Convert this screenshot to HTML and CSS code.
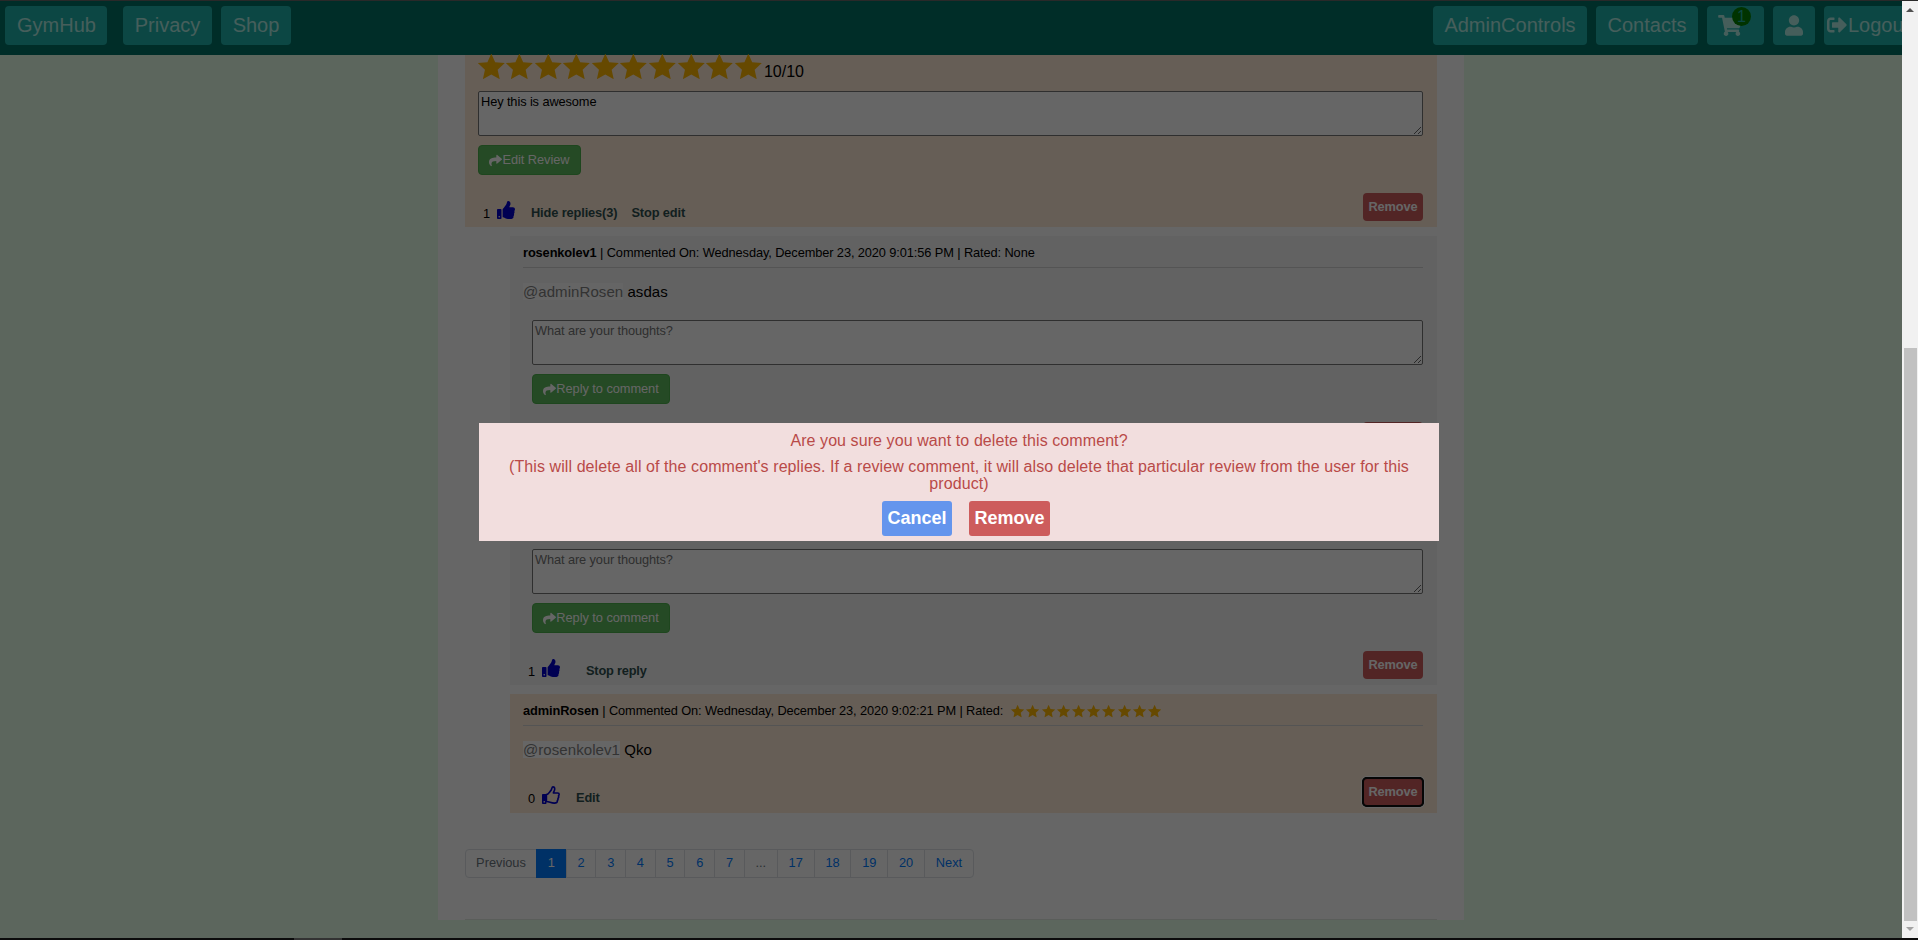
FILE: index.html
```html
<!DOCTYPE html>
<html lang="en">
<head>
<meta charset="utf-8">
<title>GymHub</title>
<link rel="stylesheet" href="styles.css">
</head>
<body>
<svg class="defs" aria-hidden="true">
  <symbol id="star" viewBox="0 0 576 512"><path d="M288 -8L366 164 560 184 416 316 458 508 288 411 118 508 160 316 16 184 210 164z"/></symbol>
  <symbol id="share" viewBox="0 0 512 512"><path d="M503.691 189.836L327.687 37.851C312.281 24.546 288 35.347 288 56.015v80.053C127.371 137.907 0 170.1 0 322.326c0 61.441 39.581 122.309 83.333 154.132 13.653 9.931 33.111-2.533 28.077-18.631C66.066 312.814 132.917 274.316 288 272.085V360c0 20.7 24.3 31.453 39.687 18.164l176.004-152c11.071-9.562 11.086-26.753 0-36.328z"/></symbol>
  <symbol id="thumb" viewBox="0 0 512 512"><path d="M104 224H24c-13.255 0-24 10.745-24 24v240c0 13.255 10.745 24 24 24h80c13.255 0 24-10.745 24-24V248c0-13.255-10.745-24-24-24zM64 472c-13.255 0-24-10.745-24-24s10.745-24 24-24 24 10.745 24 24-10.745 24-24 24zM384 81.452c0 42.416-25.97 66.208-33.277 94.548h101.723c33.397 0 59.397 27.746 59.553 58.098.084 17.938-7.546 37.249-19.439 49.197l-.11.11c9.836 23.337 8.237 56.037-9.308 79.469 8.681 25.895-.069 57.704-16.382 74.757 4.298 17.598 2.244 32.575-6.148 44.632C440.202 511.587 389.616 512 346.839 512l-2.845-.001c-48.287-.017-87.806-17.598-119.56-31.725-15.957-7.099-36.821-15.887-52.651-16.178-6.54-.12-11.783-5.457-11.783-11.998v-213.77c0-3.2 1.282-6.271 3.558-8.521 39.614-39.144 56.648-80.587 89.117-113.111 14.804-14.832 20.188-37.236 25.393-58.902C282.515 39.293 291.817 0 312 0c24 0 72 8 72 81.452z"/></symbol>
  <symbol id="thumb-o" viewBox="0 0 512 512"><path d="M104 224H24c-13 0-24 11-24 24v240c0 13 11 24 24 24h80c13 0 24-11 24-24V248c0-13-11-24-24-24zM64 472a24 24 0 1 1 0-48 24 24 0 0 1 0 48z"/><path d="M125 244C190 232 215 165 250 132c30-28 25-108 62-108 36 0 50 28 50 62 0 48-32 74-38 112h122c26 0 42 18 42 40 0 18-8 34-20 42 12 28 4 56-14 70 6 26-4 52-18 66 8 50-28 70-84 70-100 0-140-44-227-46z" fill="none" stroke="currentColor" stroke-width="46" stroke-linejoin="round"/></symbol>
</svg>
<div class="edge-top"></div>
<div class="window">
  <div class="page">
    <nav class="nav">
      <a class="nav-link brand">GymHub</a>
      <a class="nav-link privacy">Privacy</a>
      <a class="nav-link shop">Shop</a>
      <a class="nav-link admin">AdminControls</a>
      <a class="nav-link contacts">Contacts</a>
      <a class="nav-link cart"><svg class="ic-cart" viewBox="0 0 576 512"><path d="M528.12 301.319l47.273-208C578.806 78.301 567.391 64 551.99 64H159.208l-9.166-44.81C147.758 8.021 137.93 0 126.529 0H24C10.745 0 0 10.745 0 24v16c0 13.255 10.745 24 24 24h69.883l70.248 343.435C147.325 417.1 136 435.222 136 456c0 30.928 25.072 56 56 56s56-25.072 56-56c0-15.674-6.447-29.835-16.824-40h209.647C430.447 426.165 424 440.326 424 456c0 30.928 25.072 56 56 56s56-25.072 56-56c0-22.172-12.888-41.332-31.579-50.405l5.517-24.276c3.413-15.018-8.002-29.319-23.403-29.319H218.117l-6.545-32h293.145c11.206 0 20.92-7.754 23.403-18.681z"/></svg><span class="badge">1</span></a>
      <a class="nav-link user"><svg class="ic-user" viewBox="0 0 448 512"><path d="M224 256c70.7 0 128-57.3 128-128S294.7 0 224 0 96 57.3 96 128s57.3 128 128 128zm89.6 32h-16.7c-22.2 10.2-46.9 16-72.9 16s-50.6-5.8-72.9-16h-16.7C60.2 288 0 348.2 0 422.4V464c0 26.5 21.5 48 48 48h352c26.5 0 48-21.5 48-48v-41.6c0-74.2-60.2-134.4-134.4-134.4z"/></svg></a>
      <a class="nav-link logout"><svg class="ic-out" viewBox="0 0 512 512"><path d="M497 273L329 441c-15 15-41 4.5-41-17v-96H152c-13.3 0-24-10.7-24-24v-96c0-13.3 10.7-24 24-24h136V88c0-21.4 25.9-32 41-17l168 168c9.3 9.4 9.3 24.6 0 34zM192 436v-40c0-6.6-5.4-12-12-12H96c-17.7 0-32-14.3-32-32V160c0-17.7 14.3-32 32-32h84c6.6 0 12-5.4 12-12V76c0-6.6-5.4-12-12-12H96c-53 0-96 43-96 96v192c0 53 43 96 96 96h84c6.6 0 12-5.4 12-12z"/></svg>Logout</a>
    </nav>
    <main class="card">
      <section class="comment own review">
        <div class="rating"><svg><use href="#star"/></svg><svg><use href="#star"/></svg><svg><use href="#star"/></svg><svg><use href="#star"/></svg><svg><use href="#star"/></svg><svg><use href="#star"/></svg><svg><use href="#star"/></svg><svg><use href="#star"/></svg><svg><use href="#star"/></svg><svg><use href="#star"/></svg><span>10/10</span></div>
        <textarea>Hey this is awesome</textarea>
        <button class="send edit-review"><svg><use href="#share"/></svg>Edit Review</button>
        <footer class="actions"><span class="count">1</span><svg class="like"><use href="#thumb"/></svg><a class="act">Hide replies(3)</a><a class="act second">Stop edit</a><button class="remove">Remove</button></footer>
      </section>
      <section class="comment reply open">
        <header><span class="line"><b>rosenkolev1</b> | Commented On: Wednesday, December 23, 2020 9:01:56 PM | Rated: None</span></header>
        <p class="text"><span class="mention">@adminRosen</span> asdas</p>
        <div class="form"><textarea placeholder="What are your thoughts?"></textarea><button class="send"><svg><use href="#share"/></svg>Reply to comment</button></div>
        <footer class="actions"><button class="remove">Remove</button></footer>
      </section>
      <section class="comment reply open">
        <header></header>
        <p class="text"></p>
        <div class="form"><textarea placeholder="What are your thoughts?"></textarea><button class="send"><svg><use href="#share"/></svg>Reply to comment</button></div>
        <footer class="actions"><span class="count">1</span><svg class="like"><use href="#thumb"/></svg><a class="act stop-reply">Stop reply</a><button class="remove">Remove</button></footer>
      </section>
      <section class="comment reply own closed">
        <header><span class="line"><b>adminRosen</b> | Commented On: Wednesday, December 23, 2020 9:02:21 PM | Rated:</span><span class="mini"><svg><use href="#star"/></svg><svg><use href="#star"/></svg><svg><use href="#star"/></svg><svg><use href="#star"/></svg><svg><use href="#star"/></svg><svg><use href="#star"/></svg><svg><use href="#star"/></svg><svg><use href="#star"/></svg><svg><use href="#star"/></svg><svg><use href="#star"/></svg></span></header>
        <p class="text"><span class="mention">@rosenkolev1</span> Qko</p>
        <footer class="actions"><span class="count">0</span><svg class="like"><use href="#thumb-o"/></svg><a class="act edit">Edit</a><button class="remove focused">Remove</button></footer>
      </section>
      <ul class="pages">
        <li class="off prev">Previous</li><li class="on">1</li><li>2</li><li>3</li><li>4</li><li>5</li><li>6</li><li>7</li><li class="off dots">...</li><li class="wide">17</li><li class="wide">18</li><li class="wide">19</li><li class="wide">20</li><li class="next">Next</li>
      </ul>
      <div class="rule"></div>
    </main>
    <div class="overlay">
      <div class="modal">
        <p>Are you sure you want to delete this comment?</p>
        <p>(This will delete all of the comment's replies. If a review comment, it will also delete that particular review from the user for this product)</p>
        <div class="choices"><button class="cancel">Cancel</button><button class="confirm">Remove</button></div>
      </div>
    </div>
  </div>
  <div class="scrollbar"><i class="up"></i><i class="thumb"></i><i class="down"></i></div>
</div>
<div class="edge-bottom"><i></i></div>
</body>
</html>
```
FILE: styles.css
```css
* { box-sizing: border-box; }
body {
  margin: 0; width: 1918px; height: 940px; overflow: hidden;
  font-family: "Liberation Sans", Arial, sans-serif;
  display: flex; flex-direction: column;
}
button, textarea { font-family: inherit; margin: 0; }
svg { fill: currentColor; display: block; flex: none; }
.defs { position: absolute; width: 0; height: 0; }
.edge-top { height: 1px; background: #292929; flex: none; }
.edge-bottom { height: 2px; background: #0c0c0c; flex: none; }
.edge-bottom i { display: block; width: 48px; height: 2px; margin-left: 294px; background: #333; }
.window { height: 937px; display: flex; }
.page { width: 1902px; height: 937px; position: relative; overflow: hidden; background: #e6ffe9; }

.nav { height: 54px; padding: 5px 0 0 5px; display: flex; background: #007065; }
.nav-link {
  height: 39px; border-radius: 4px; background: #20b2aa; color: #b0ece4;
  font-size: 20px; line-height: 38px; text-align: center; flex: none; margin-right: 9px;
}
.brand { width: 102px; margin-right: 16px; padding-left: 1px; }
.privacy { width: 89px; }
.shop { width: 70px; margin-right: auto; }
.admin { width: 154px; }
.contacts { width: 102px; }
.cart { width: 57px; padding: 9px 0 0 11px; position: relative; }
.user { width: 42px; padding: 9px 0 0 12px; }
.logout { width: 88px; margin-right: -10px; padding-left: 3px; display: flex; gap: 1px; }
.ic-cart { width: 24px; height: 21px; }
.ic-user { width: 18px; height: 21px; }
.ic-out { width: 20px; height: 20px; margin-top: 9px; }
.badge {
  position: absolute; left: 25px; top: 1px; width: 19px; height: 19px;
  border-radius: 50%; background: #008000; color: #20b2aa; font-size: 16px; line-height: 19px;
}

.card { margin-left: 438px; width: 1026px; height: 865px; padding: 0 27px; background: #fff; }
.comment { background: #f5f5f5; display: flow-root; }
.own { background: #ffebd7; }
.review { height: 172px; padding: 0 14px 0 13px; }
.rating { height: 36px; display: flex; color: #ffb700; }
.rating svg { width: 28.6px; height: 25.4px; margin-left: -1.5px; margin-right: 1.5px; margin-top: -1px; }
.rating span { color: #000; font-size: 16px; line-height: 34px; }
textarea {
  display: block; width: 100%; height: 45px; padding: 2px; font-size: 12.8px; line-height: 16px; letter-spacing: -.1px;
  border: 1px solid #767676; border-radius: 2px; color: #000; background: #fff;
}
.send {
  display: flex; align-items: center; justify-content: center; width: 138px; height: 30px; margin-top: 9px;
  border: 1px solid #4cae4c; border-radius: 4px; background: #5cb85c; color: #fff;
  font-size: 12.8px; line-height: 16px; padding: 0; letter-spacing: -.05px;
}
.send svg { width: 13px; height: 13px; }
.edit-review { width: 103px; }
.actions { display: flex; height: 28px; color: #2f4f4f; font-size: 12.8px; line-height: 40px; padding-left: 5px; }
.review .actions { margin-top: 18px; }
.count { color: #000; width: 14px; line-height: 41px; }
.like { width: 18px; height: 18px; margin-top: 8px; color: #0000cd; }
.act { font-weight: bold; margin-left: 16px; letter-spacing: -.12px; }
.act.second { margin-left: 14px; }
.act.stop-reply { margin-left: 26px; letter-spacing: -.2px; }
.act.edit { margin-left: 16px; }
.remove {
  margin-left: auto; width: 60px; height: 28px; border: 0; border-radius: 4px; padding: 0;
  background: #cd5c5c; color: #fff; font-weight: bold; font-size: 12.8px; line-height: 28px; letter-spacing: -.1px;
}
.focused { box-shadow: 0 0 0 1px #101010, 0 0 0 2px #fff; outline: 2px solid #101010; outline-offset: -1px; }
.reply { margin: 9px 0 0 45px; padding: 0 14px 0 13px; }
.open { height: 220px; }
.closed { height: 119px; }
.reply header { height: 32px; display: flex; border-bottom: 1px solid #d3d3d3; font-size: 12.8px; line-height: 34px; }
.line { white-space: nowrap; letter-spacing: -.1px; }
.mini { display: flex; padding: 11px 0 0 7px; color: #ffb700; }
.mini svg { width: 15.2px; height: 12.5px; }
.text { margin: 15px 0 0; height: 17px; font-size: 15px; line-height: 17px; letter-spacing: .07px; }
.mention { background: #fff; color: #808080; display: inline-block; height: 17px; }
.reply:not(.own) .mention { background: #fcfcfc; }
.form { padding: 20px 0 0 9px; }
.open .actions { margin-top: 18px; }
.closed .actions { margin-top: 20px; }
.pages { list-style: none; display: flex; margin: 36px 0 0; padding: 0; height: 29px; font-size: 12.8px; line-height: 26px; color: #007bff; }
.pages li { width: 30.7px; margin-right: -1px; border: 1px solid #dee2e6; text-align: center; }
.pages .off { color: #6c757d; }
.pages .on { background: #007bff; border-color: #007bff; color: #fff; }
.pages .prev { width: 72px; border-radius: 4px 0 0 4px; }
.pages .dots { width: 34px; }
.pages .wide { width: 37.8px; }
.pages .next { width: 50px; border-radius: 0 4px 4px 0; }
.rule { margin-top: 41px; height: 1px; background: #e2e8e2; }

.overlay { position: absolute; inset: 0; background: rgba(0,0,0,.6); }
.modal {
  position: absolute; left: 479px; top: 422px; width: 960px; height: 118px; padding: 9px 25px 0;
  background: #f2dede; color: #b94a48; font-size: 16px; line-height: 17px; text-align: center;
}
.modal p { margin: 0 0 9px; letter-spacing: .083px; }
.choices { display: flex; gap: 17px; padding-left: 378px; }
.choices button { height: 35px; border: 0; border-radius: 3px; padding: 0; color: #fff; font-size: 18px; font-weight: bold; }
.cancel { width: 70px; background: #6495ed; }
.confirm { width: 81px; background: #cd5c5c; }

.scrollbar { width: 16px; background: #f1f1f1; display: flex; flex-direction: column; align-items: center; }
.up { border: 4px solid transparent; border-top: 0; border-bottom: 4px solid #505050; margin-top: 7px; }
.thumb { width: 13px; height: 573px; background: #c1c1c1; margin-top: 336px; }
.down { border: 4px solid transparent; border-bottom: 0; border-top: 4px solid #a3a3a3; margin-top: 6px; }
```
